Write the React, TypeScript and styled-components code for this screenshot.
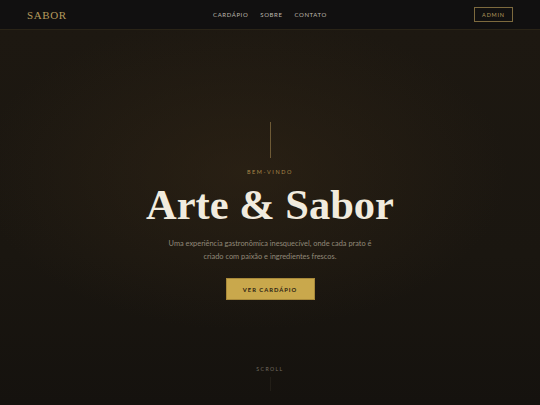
import React from 'react'
import styled, { createGlobalStyle } from 'styled-components'

const GlobalStyle = createGlobalStyle`
  html, body {
    margin: 0;
    padding: 0;
    background: #14110d;
  }
  * { box-sizing: border-box; }
`

const Page = styled.div`
  width: 540px;
  height: 405px;
  display: flex;
  flex-direction: column;
  overflow: hidden;
  font-family: Lato, 'Open Sans', sans-serif;
`

const NavBar = styled.header`
  height: 30px;
  flex: none;
  display: grid;
  grid-template-columns: 1fr auto 1fr;
  align-items: center;
  padding: 0 27px;
  background: #111010;
  border-bottom: 1px solid #2a2417;
`

const Logo = styled.div`
  font-family: 'Liberation Serif', 'DejaVu Serif', serif;
  font-size: 11px;
  letter-spacing: 0.6px;
  color: #b49a5c;
`

const Links = styled.nav`
  display: flex;
  gap: 12px;
`

const NavLink = styled.a`
  font-size: 6px;
  letter-spacing: 0.6px;
  color: #bdb7ad;
  text-decoration: none;
`

const AdminButton = styled.button`
  justify-self: end;
  width: 39px;
  height: 15px;
  padding: 0;
  background: transparent;
  border: 1px solid #7d6a3e;
  color: #b49a5c;
  font-family: inherit;
  font-size: 5.5px;
  letter-spacing: 0.8px;
`

const Hero = styled.main`
  flex: 1;
  display: flex;
  flex-direction: column;
  align-items: center;
  padding-top: 92px;
  background:
    radial-gradient(ellipse 70% 60% at 45% 38%, rgba(52, 39, 22, 0.55), rgba(0, 0, 0, 0) 70%),
    linear-gradient(180deg, #1d1811 0%, #1a1610 60%, #15120e 100%);
`

const Rule = styled.div<{ $h: number; $c: string }>`
  width: 1px;
  height: ${p => p.$h}px;
  background: ${p => p.$c};
`

const Eyebrow = styled.div`
  margin-top: 11px;
  font-size: 5.5px;
  letter-spacing: 1.6px;
  color: #a88a4a;
`

const Title = styled.h1`
  margin: 6px 0 0;
  font-family: 'Liberation Serif', 'DejaVu Serif', serif;
  font-weight: 700;
  font-size: 42.5px;
  line-height: 48px;
  color: #f1ebde;
`

const Lead = styled.p`
  margin: 8px 0 0;
  width: 214px;
  text-align: center;
  font-size: 7.4px;
  line-height: 13px;
  color: #918979;
`

const CtaButton = styled.button`
  margin-top: 15px;
  width: 89px;
  height: 22px;
  padding: 0;
  background: #c9a84c;
  border: 1px solid #a8893a;
  color: #2a2112;
  font-family: inherit;
  font-weight: 700;
  font-size: 5.8px;
  letter-spacing: 1px;
`

const ScrollLabel = styled.div`
  margin-top: 66px;
  margin-bottom: 5px;
  font-size: 5.2px;
  letter-spacing: 1.4px;
  color: #746d62;
`

export default function App() {
  return (
    <>
      <GlobalStyle />
      <Page>
        <NavBar>
          <Logo>SABOR</Logo>
          <Links>
            <NavLink>CARDÁPIO</NavLink>
            <NavLink>SOBRE</NavLink>
            <NavLink>CONTATO</NavLink>
          </Links>
          <AdminButton>ADMIN</AdminButton>
        </NavBar>
        <Hero>
          <Rule $h={36} $c="#6e5a35" />
          <Eyebrow>BEM-VINDO</Eyebrow>
          <Title>Arte &amp; Sabor</Title>
          <Lead>
            Uma experiência gastronômica inesquecível, onde cada prato é
            criado com paixão e ingredientes frescos.
          </Lead>
          <CtaButton>VER CARDÁPIO</CtaButton>
          <ScrollLabel>SCROLL</ScrollLabel>
          <Rule $h={14} $c="#221e17" />
        </Hero>
      </Page>
    </>
  )
}
